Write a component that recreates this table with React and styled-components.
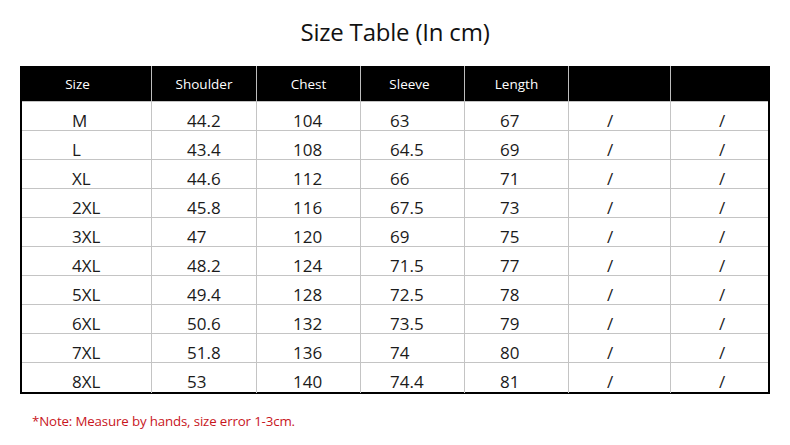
import styled, { createGlobalStyle } from "styled-components";

const GlobalStyle = createGlobalStyle`
  body {
    margin: 0;
    background: #fff;
    font-family: "Open Sans", "Noto Sans", sans-serif;
  }
`;

const Page = styled.div`
  width: 790px;
  height: 445px;
  padding: 14px 20px 0;
  box-sizing: border-box;
  display: flex;
  flex-direction: column;
`;

const Title = styled.h1`
  margin: 0 0 16px;
  font-size: 24px;
  font-weight: 400;
  line-height: 36px;
  letter-spacing: -0.2px;
  color: #111;
  text-align: center;
`;

const Table = styled.div`
  width: 750px;
  border: 2px solid #000;
  border-top: none;
  box-sizing: border-box;
`;

const Row = styled.div`
  display: grid;
  grid-template-columns: 130px 105px 104px 104px 104px 102px 97px;
  height: ${(p) => (p.$head ? "36px" : "29px")};
  background: ${(p) => (p.$head ? "#000" : "#fff")};
  border-bottom: ${(p) => (p.$last ? "none" : "1px solid #c4c4c4")};
  box-sizing: border-box;
`;

const HeadCell = styled.div`
  display: flex;
  align-items: center;
  justify-content: center;
  padding-right: ${(p) => p.$shift || 0}px;
  color: #fff;
  font-size: 13.5px;
  border-right: 1px solid #bdbdbd;
  &:last-child {
    border-right: none;
  }
`;

const Cell = styled.div`
  display: flex;
  align-items: center;
  padding: 7px 0 0 ${(p) => p.$pad}px;
  color: #1b1b1b;
  font-size: 17px;
  border-right: 1px solid #c4c4c4;
  &:last-child {
    border-right: none;
  }
`;

const Note = styled.p`
  margin: 17px 0 0 12px;
  font-size: 13.3px;
  line-height: 20px;
  letter-spacing: -0.15px;
  color: #c8161d;
`;

const heads = ["Size", "Shoulder", "Chest", "Sleeve", "Length", "", ""];
const shifts = [18, 0, 0, 6, 0, 0, 0];
const pads = [50, 35, 36, 29, 35, 38, 48];

const rows = [
  ["M", "44.2", "104", "63", "67"],
  ["L", "43.4", "108", "64.5", "69"],
  ["XL", "44.6", "112", "66", "71"],
  ["2XL", "45.8", "116", "67.5", "73"],
  ["3XL", "47", "120", "69", "75"],
  ["4XL", "48.2", "124", "71.5", "77"],
  ["5XL", "49.4", "128", "72.5", "78"],
  ["6XL", "50.6", "132", "73.5", "79"],
  ["7XL", "51.8", "136", "74", "80"],
  ["8XL", "53", "140", "74.4", "81"],
];

const App = () => {
  return (
    <Page>
      <GlobalStyle />
      <Title>Size Table (In cm)</Title>
      <Table>
        <Row $head>
          {heads.map((h, i) => (
            <HeadCell key={i} $shift={shifts[i]}>
              {h}
            </HeadCell>
          ))}
        </Row>
        {rows.map((r, i) => (
          <Row key={r[0]} $last={i === rows.length - 1}>
            {[...r, "/", "/"].map((v, j) => (
              <Cell key={j} $pad={pads[j]}>
                {v}
              </Cell>
            ))}
          </Row>
        ))}
      </Table>
      <Note>*Note: Measure by hands, size error 1-3cm.</Note>
    </Page>
  );
};

export default App;
